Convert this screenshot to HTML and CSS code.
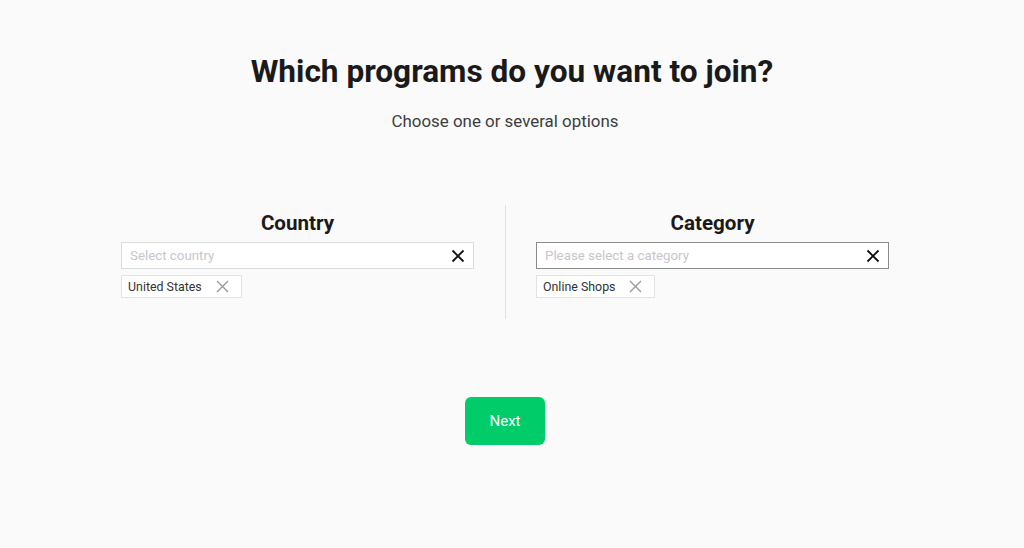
FILE: index.html
```html
<!DOCTYPE html>
<html lang="en">
<head>
<meta charset="utf-8">
<title>Which programs do you want to join?</title>
<link rel="stylesheet" href="styles.css">
</head>
<body>
<main class="page">
  <h1 class="title">Which programs do you want to join?</h1>
  <p class="subtitle">Choose one or several options</p>

  <div class="columns">
    <section class="col">
      <h2 class="col-title">Country</h2>
      <div class="select">
        <span class="placeholder">Select country</span>
        <svg class="clear" viewBox="0 0 14 14" width="14" height="14"><path d="M1.5 1.5L12.5 12.5M12.5 1.5L1.5 12.5" stroke="#111" stroke-width="1.8" fill="none"/></svg>
      </div>
      <div class="tags">
        <span class="tag">United States<svg class="tag-x" viewBox="0 0 13 13" width="13" height="13"><path d="M1 1L12 12M12 1L1 12" stroke="#9a9a9a" stroke-width="1.4" fill="none"/></svg></span>
      </div>
    </section>
    <div class="divider"></div>
    <section class="col">
      <h2 class="col-title">Category</h2>
      <div class="select focused">
        <span class="placeholder">Please select a category</span>
        <svg class="clear" viewBox="0 0 14 14" width="14" height="14"><path d="M1.5 1.5L12.5 12.5M12.5 1.5L1.5 12.5" stroke="#111" stroke-width="1.8" fill="none"/></svg>
      </div>
      <div class="tags">
        <span class="tag">Online Shops<svg class="tag-x" viewBox="0 0 13 13" width="13" height="13"><path d="M1 1L12 12M12 1L1 12" stroke="#9a9a9a" stroke-width="1.4" fill="none"/></svg></span>
      </div>
    </section>
  </div>

  <div class="actions">
    <button class="next" type="button">Next</button>
  </div>
</main>
</body>
</html>
```

FILE: styles.css
```css
* { box-sizing: border-box; }
html, body {
  margin: 0;
  padding: 0;
  background: #fafafa;
  font-family: Roboto, "Liberation Sans", Arial, sans-serif;
  color: #1a1a1a;
}
.page {
  padding-top: 54px;
  padding-right: 14px;
}
.title {
  margin: 0 -14px 0 0;
  text-align: center;
  font-size: 31.6px;
  line-height: 36px;
  font-weight: 700;
  color: #1a1a1a;
}
.subtitle {
  margin: 21px 0 0;
  text-align: center;
  font-size: 16.9px;
  line-height: 20px;
  color: #3d3d3d;
}
.columns {
  display: flex;
  width: 768px;
  margin: 74px auto 0;
}
.col {
  width: 354px;
  padding-top: 6px;
  padding-bottom: 21px;
}
.divider {
  width: 1px;
  background: #e2e2e2;
  margin: 0 30px 0 31px;
}
.col-title {
  margin: 0;
  text-align: center;
  font-size: 20.6px;
  line-height: 24px;
  font-weight: 700;
  color: #1a1a1a;
}
.select {
  margin-top: 7px;
  height: 27px;
  display: flex;
  align-items: center;
  justify-content: space-between;
  padding: 0 8px 0 8px;
  background: #fff;
  border: 1px solid #dcdcdc;
}
.select.focused {
  border-color: #8a8a8a;
}
.placeholder {
  font-size: 13.3px;
  color: #c9c4cd;
}
.clear { display: block; }
.tags {
  margin-top: 6px;
  display: flex;
}
.tag {
  display: inline-flex;
  align-items: center;
  height: 23px;
  padding: 0 12px 0 6px;
  background: #fff;
  border: 1px solid #e3e3e3;
  font-size: 12.4px;
  color: #333;
}
.tag-x {
  margin-left: 14px;
  display: block;
}
.actions {
  display: flex;
  justify-content: center;
  margin-top: 78px;
}
.next {
  width: 80px;
  height: 48px;
  border: 0;
  border-radius: 6px;
  background: #00cc6a;
  color: #fff;
  font-family: Roboto, "Liberation Sans", Arial, sans-serif;
  font-size: 15px;
  cursor: pointer;
}
```
